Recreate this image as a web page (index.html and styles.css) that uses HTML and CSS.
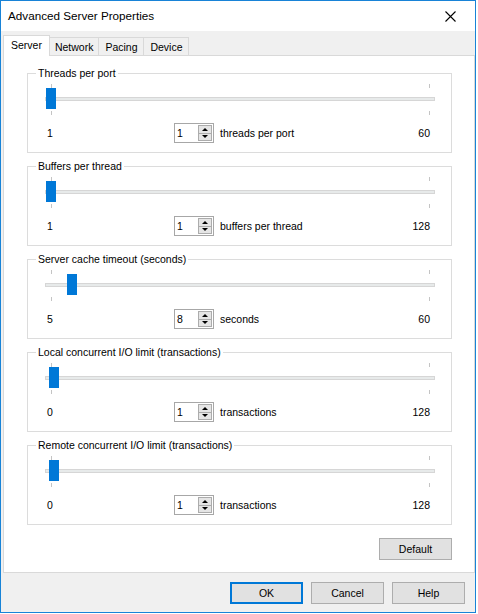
FILE: index.html
```html
<!DOCTYPE html>
<html>
<head>
<meta charset="utf-8">
<link rel="stylesheet" href="styles.css">
</head>
<body>
<div class="window">
  <div class="titlebar">
    <span class="title">Advanced Server Properties</span>
    <span class="close"><svg width="11" height="11" viewBox="0 0 11 11"><path d="M0.5 0.5 L10.5 10.5 M10.5 0.5 L0.5 10.5" stroke="#000" stroke-width="1.1" fill="none"/></svg></span>
  </div>
  <div class="client">
    <div class="tabs">
      <div class="tab active">Server</div>
      <div class="tab">Network</div>
      <div class="tab">Pacing</div>
      <div class="tab">Device</div>
    </div>
    <div class="panel">
      <div class="groups">
        <div class="group">
          <div class="legend">Threads per port</div>
          <div class="slider">
            <span class="tick tick-top tick-min"></span><span class="tick tick-top tick-max"></span>
            <span class="track"></span>
            <span class="thumb" style="left:1px"></span>
            <span class="tick tick-bot tick-min"></span><span class="tick tick-bot tick-max"></span>
          </div>
          <div class="scale">
            <span class="min">1</span>
            <span class="spin"><span class="spin-val">1</span><span class="spin-btns"><span class="sb up"></span><span class="sb down"></span></span></span>
            <span class="unit">threads per port</span>
            <span class="max">60</span>
          </div>
        </div>
        <div class="group">
          <div class="legend">Buffers per thread</div>
          <div class="slider">
            <span class="tick tick-top tick-min"></span><span class="tick tick-top tick-max"></span>
            <span class="track"></span>
            <span class="thumb" style="left:1px"></span>
            <span class="tick tick-bot tick-min"></span><span class="tick tick-bot tick-max"></span>
          </div>
          <div class="scale">
            <span class="min">1</span>
            <span class="spin"><span class="spin-val">1</span><span class="spin-btns"><span class="sb up"></span><span class="sb down"></span></span></span>
            <span class="unit">buffers per thread</span>
            <span class="max">128</span>
          </div>
        </div>
        <div class="group">
          <div class="legend">Server cache timeout (seconds)</div>
          <div class="slider">
            <span class="tick tick-top tick-min"></span><span class="tick tick-top tick-max"></span>
            <span class="track"></span>
            <span class="thumb" style="left:22px"></span>
            <span class="tick tick-bot tick-min"></span><span class="tick tick-bot tick-max"></span>
          </div>
          <div class="scale">
            <span class="min">5</span>
            <span class="spin"><span class="spin-val">8</span><span class="spin-btns"><span class="sb up"></span><span class="sb down"></span></span></span>
            <span class="unit">seconds</span>
            <span class="max">60</span>
          </div>
        </div>
        <div class="group">
          <div class="legend">Local concurrent I/O limit (transactions)</div>
          <div class="slider">
            <span class="tick tick-top tick-min"></span><span class="tick tick-top tick-max"></span>
            <span class="track"></span>
            <span class="thumb" style="left:4px"></span>
            <span class="tick tick-bot tick-min"></span><span class="tick tick-bot tick-max"></span>
          </div>
          <div class="scale">
            <span class="min">0</span>
            <span class="spin"><span class="spin-val">1</span><span class="spin-btns"><span class="sb up"></span><span class="sb down"></span></span></span>
            <span class="unit">transactions</span>
            <span class="max">128</span>
          </div>
        </div>
        <div class="group">
          <div class="legend">Remote concurrent I/O limit (transactions)</div>
          <div class="slider">
            <span class="tick tick-top tick-min"></span><span class="tick tick-top tick-max"></span>
            <span class="track"></span>
            <span class="thumb" style="left:4px"></span>
            <span class="tick tick-bot tick-min"></span><span class="tick tick-bot tick-max"></span>
          </div>
          <div class="scale">
            <span class="min">0</span>
            <span class="spin"><span class="spin-val">1</span><span class="spin-btns"><span class="sb up"></span><span class="sb down"></span></span></span>
            <span class="unit">transactions</span>
            <span class="max">128</span>
          </div>
        </div>
      </div>
      <div class="panel-foot">
        <button class="btn">Default</button>
      </div>
    </div>
    <div class="footer">
      <button class="btn btn-default">OK</button>
      <button class="btn">Cancel</button>
      <button class="btn">Help</button>
    </div>
  </div>
</div>
</body>
</html>
```
FILE: styles.css
```css
html, body {
  margin: 0;
  padding: 0;
  background: #ffffff;
}
body {
  font-family: "Liberation Sans", Arial, sans-serif;
  font-size: 10.5px;
  color: #000;
}
.window {
  width: 476px;
  height: 613px;
  box-sizing: border-box;
  border: 1px solid #1883d7;
  display: flex;
  flex-direction: column;
  background: #f0f0f0;
}
.titlebar {
  height: 30px;
  flex: none;
  background: #fff;
  display: flex;
  align-items: center;
  justify-content: space-between;
  padding-left: 7px;
}
.title {
  font-family: "Liberation Sans", Arial, sans-serif;
  font-size: 11.7px;
  margin-top: -1px;
}
.close {
  width: 46px;
  height: 30px;
  display: flex;
  align-items: center;
  justify-content: center;
  margin-right: 2px;
}
.client {
  flex: 1;
  display: flex;
  flex-direction: column;
  padding: 4px 0 0 2px;
}
.tabs {
  display: flex;
  align-items: flex-end;
  height: 20px;
  position: relative;
  z-index: 1;
}
.tab {
  height: 18px;
  min-width: 46px;
  box-sizing: border-box;
  border: 1px solid #d9d9d9;
  border-bottom: none;
  background: #f0f0f0;
  padding: 0 5px;
  line-height: 18px;
  text-align: center;
  margin-left: -1px;
}
.tab.active {
  margin-left: 0;
  height: 21px;
  margin-bottom: -1px;
  background: #fff;
  padding: 0 7px;
  line-height: 19px;
  z-index: 2;
  position: relative;
}
.panel {
  width: 472px;
  height: 518px;
  box-sizing: border-box;
  border: 1px solid #d9d9d9;
  background: #fff;
  padding: 17px 22px 12px 23px;
  display: flex;
  flex-direction: column;
}
.groups {
  display: flex;
  flex-direction: column;
  gap: 13px;
}
.group {
  height: 80px;
  box-sizing: border-box;
  border: 1px solid #dcdcdc;
}
.legend {
  display: block;
  width: fit-content;
  margin: -8px 0 0 8px;
  padding: 0 2px;
  background: #fff;
  line-height: 14px;
  height: 14px;
}
.slider {
  position: relative;
  height: 31px;
  width: 390px;
  margin: 4px 0 0 17px;
}
.track {
  position: absolute;
  left: 0;
  right: 0;
  top: 13px;
  height: 4px;
  box-sizing: border-box;
  background: #e7eaea;
  border: 1px solid #d6d6d6;
}
.thumb {
  position: absolute;
  top: 4px;
  width: 10px;
  height: 21px;
  background: #0078d7;
}
.tick {
  position: absolute;
  width: 1px;
  height: 4px;
  background: #c4c4c4;
}
.tick-top { top: 0; }
.tick-bot { top: 27px; }
.tick-min { left: 6px; }
.tick-max { left: 384px; }
.scale {
  display: grid;
  grid-template-columns: 127px auto 1fr auto;
  align-items: center;
  height: 20px;
  margin: 8px 21px 0 19px;
}
.spin {
  width: 40px;
  height: 20px;
  box-sizing: border-box;
  border: 1px solid #a7a7a7;
  background: #fff;
  display: flex;
}
.spin-val {
  flex: 1;
  padding-left: 2px;
  line-height: 18px;
}
.spin-btns {
  width: 15px;
  box-sizing: border-box;
  padding: 1px 1px 1px 0;
  display: flex;
  flex-direction: column;
}
.sb {
  flex: 1;
  box-sizing: border-box;
  border: 1px solid #acacac;
  background: #e5e5e5;
  display: flex;
  align-items: center;
  justify-content: center;
}
.sb.up { border-bottom: none; }
.sb::after {
  content: "";
  width: 0;
  height: 0;
  border-left: 3px solid transparent;
  border-right: 3px solid transparent;
}
.sb.up::after { border-bottom: 3px solid #000; }
.sb.down::after { border-top: 3px solid #000; }
.unit {
  margin-left: 6px;
}
.max {
  text-align: right;
}
.panel-foot {
  margin-top: 13px;
  display: flex;
  justify-content: flex-end;
}
.btn {
  width: 73px;
  height: 22px;
  box-sizing: border-box;
  border: 1px solid #adadad;
  background: #e1e1e1;
  font-family: "Liberation Sans", Arial, sans-serif;
  font-size: 10.5px;
  color: #000;
  padding: 0;
  margin: 0;
}
.btn-default {
  border: 2px solid #0078d7;
}
.footer {
  display: flex;
  justify-content: flex-end;
  gap: 8px;
  padding: 9px 10px 0 0;
}
```
